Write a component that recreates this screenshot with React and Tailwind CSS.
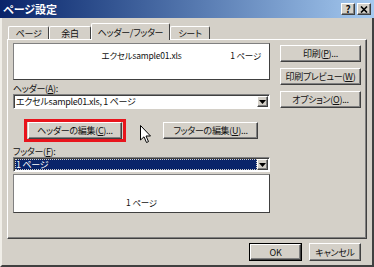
import React from "react";

const raised =
  "bg-[#d4d0c8] border border-t-white border-l-white border-r-[#404040] border-b-[#404040] shadow-[inset_-1px_-1px_0_#808080]";
const sunken =
  "border border-t-[#808080] border-l-[#808080] border-r-white border-b-white shadow-[inset_1px_1px_0_#404040]";

const Button = ({ children, className = "" }) => (
  <div
    className={`${raised} flex items-center justify-center whitespace-nowrap text-[9px] tracking-[-0.3px] leading-none text-[#111] ${className}`}
  >
    {children}
  </div>
);

const Arrow = () => (
  <div className={`${raised} w-[11px] h-full flex items-center justify-center`}>
    <svg width="7" height="4" viewBox="0 0 7 4">
      <path d="M0 0 H7 L3.5 4 Z" fill="#000" />
    </svg>
  </div>
);

const Combo = ({ children, selected }) => (
  <div className={`${sunken} bg-white h-[15px] flex items-stretch p-[1px]`}>
    <div
      className={`flex-1 flex items-center pl-[1px] text-[9px] tracking-[-0.3px] leading-none ${
        selected
          ? "bg-[#0a246a] text-white outline outline-1 outline-dotted outline-[#d4d0c8] -outline-offset-1"
          : "text-[#111]"
      }`}
    >
      {children}
    </div>
    <Arrow />
  </div>
);

const Tab = ({ label, width, active }) => (
  <div
    className={`relative flex items-center justify-center whitespace-nowrap text-[9px] tracking-[-0.3px] leading-none bg-[#d4d0c8] border-t border-l border-t-white border-l-white border-r border-r-[#404040] rounded-t-[2px] ${
      active ? "h-[17px] -mb-[1px] z-10" : "h-[13px]"
    }`}
    style={{ width }}
  >
    {label}
  </div>
);

const U = ({ children }) => <span className="underline">{children}</span>;

export default function App() {
  return (
    <div
      className="relative w-[374px] h-[267px] bg-[#d4d0c8] flex flex-col overflow-hidden text-[#111] [font-feature-settings:'palt']"
      style={{ fontFamily: '"Noto Sans CJK JP", "Noto Sans", sans-serif' }}
    >
      {/* Title bar */}
      <div className="h-[18px] shrink-0 flex items-center bg-gradient-to-r from-[#0a246a] to-[#a6caf0] pl-[3px] pr-[3px]">
        <span className="text-white font-bold text-[11px] leading-none">ページ設定</span>
        <div className="ml-auto flex gap-[2px]">
          <div className={`${raised} w-[14px] h-[12px] flex items-center justify-center text-[10px] font-bold leading-none`}>
            ?
          </div>
          <div className={`${raised} w-[14px] h-[12px] flex items-center justify-center`}>
            <svg width="8" height="7" viewBox="0 0 8 7">
              <path d="M1 0.5 L7 6.5 M7 0.5 L1 6.5" stroke="#000" strokeWidth="1.6" />
            </svg>
          </div>
        </div>
      </div>

      {/* Body */}
      <div className="flex-1 flex flex-col border-l-2 border-l-[#f0eee8] border-r-2 border-r-[#404040] border-b-2 border-b-[#404040] pl-[5px] pt-[5px]">
        {/* Tabs */}
        <div className="flex items-end h-[16px] pl-[1px]">
          <Tab label="ページ" width={41} />
          <Tab label="余白" width={42} />
          <Tab label="ヘッダー/フッター" width={79} active />
          <Tab label="シート" width={40} />
        </div>

        {/* Panel */}
        <div className="w-[360px] h-[200px] border border-t-white border-l-white border-r-[#404040] border-b-[#404040] shadow-[inset_-1px_-1px_0_#808080] flex pl-[5px] pt-[3px]">
          <div className="w-[257px] flex flex-col">
            {/* Header preview */}
            <div className="relative h-[37px] bg-white border border-t-[#808080] border-l-[#808080] border-r-[#404040] border-b-[#404040] flex justify-center pt-[7px]">
              <span className="text-[8.5px] tracking-[-0.2px] leading-none">エクセルsample01.xls</span>
              <span className="absolute right-[8px] top-[7px] text-[8.5px] tracking-[-0.2px] leading-none">1 ページ</span>
            </div>

            <div className="mt-[2px] h-[12px] flex items-center text-[9px] tracking-[-0.3px] leading-none">
              ヘッダー(<U>A</U>):
            </div>
            <Combo>エクセルsample01.xls, 1 ページ</Combo>

            <div className="mt-[10px] flex items-center h-[23px]">
              <div className="ml-[11px] w-[102px] h-[23px] border-[3px] border-[#e8141c] flex items-center justify-center">
                <Button className="w-[94px] h-[17px]">
                  ヘッダーの編集(<U>C</U>)...
                </Button>
              </div>
              <Button className="ml-[37px] w-[95px] h-[17px]">
                フッターの編集(<U>U</U>)...
              </Button>
            </div>

            <div className="mt-[3px] h-[12px] flex items-center text-[9px] tracking-[-0.3px] leading-none">
              フッター(<U>F</U>):
            </div>
            <Combo selected>1 ページ</Combo>

            {/* Footer preview */}
            <div className="mt-[2px] h-[39px] bg-white border border-t-[#808080] border-l-[#808080] border-r-[#404040] border-b-[#404040] flex justify-center items-end pb-[6px]">
              <span className="text-[8.5px] tracking-[-0.2px] leading-none">1 ページ</span>
            </div>
          </div>

          <div className="ml-[10px] pt-[2px] flex flex-col gap-[6px]">
            <Button className="w-[81px] h-[17px]">
              印刷(<U>P</U>)...
            </Button>
            <Button className="w-[81px] h-[17px]">
              印刷プレビュー(<U>W</U>)
            </Button>
            <Button className="w-[81px] h-[17px]">
              オプション(<U>O</U>)...
            </Button>
          </div>
        </div>

        {/* Bottom buttons */}
        <div className="mt-[4px] flex pl-[242px] gap-[7px]">
          <div className="w-[53px] h-[18px] border border-black flex">
            <Button className="flex-1">OK</Button>
          </div>
          <Button className="w-[52px] h-[18px]">キャンセル</Button>
        </div>
      </div>

      {/* Mouse cursor */}
      <svg
        className="absolute left-[140px] top-[125px]"
        width="12"
        height="19"
        viewBox="0 0 12 19"
      >
        <path
          d="M0.5 0.5 L0.5 15 L4 11.8 L6.5 17.5 L8.5 16.6 L6 11 L10.5 11 Z"
          fill="#fff"
          stroke="#000"
          strokeWidth="1"
        />
      </svg>
    </div>
  );
}
